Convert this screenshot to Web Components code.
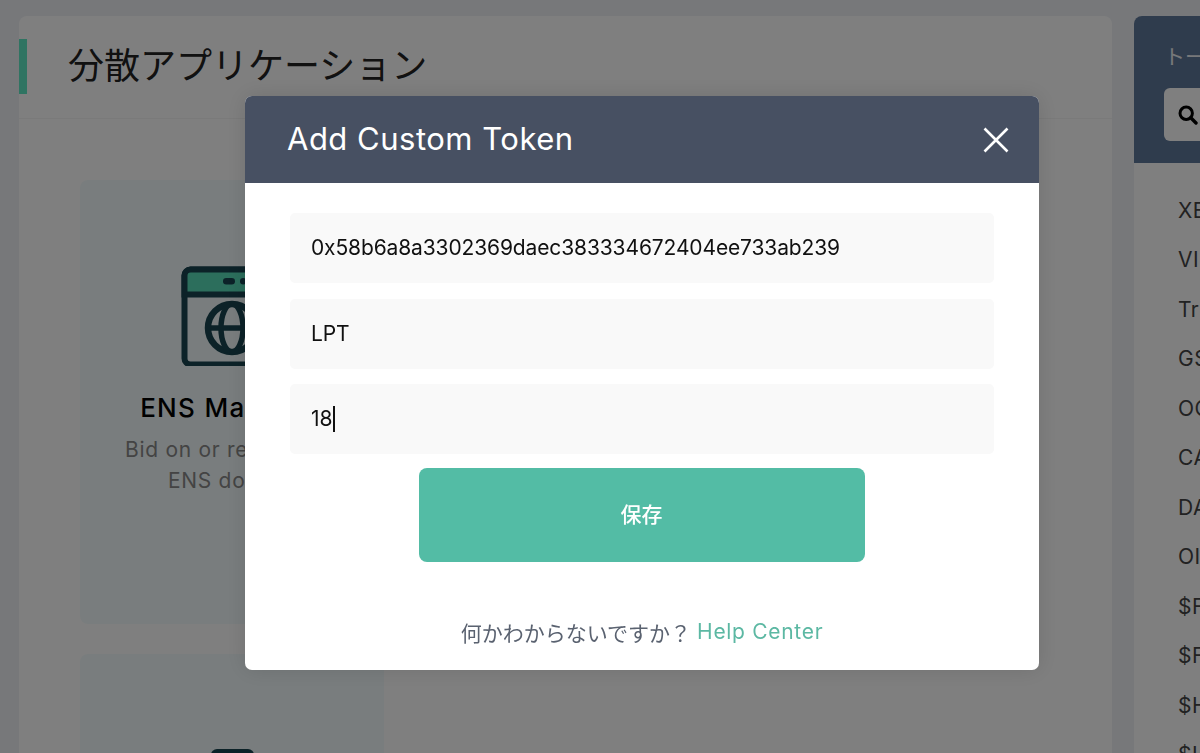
<!DOCTYPE html>
<html lang="ja"><head><meta charset="utf-8"><title>Add Custom Token</title>
<style>
html,body{margin:0;height:753px;overflow:hidden;background:#eef0f5;font-family:Inter,"Noto Sans CJK JP",sans-serif}
</style></head>
<body>
<dapp-page>
  <dapp-main>
    <dapp-tile name="ENS Manager" desc="Bid on or reserve an|ENS domain">
      <svg slot="icon" width="102" height="100" viewBox="0 0 102 100"><rect x="3.5" y="3.5" width="95" height="95" rx="6" fill="none" stroke="#184450" stroke-width="6"/><path d="M3.5 9.5a6 6 0 0 1 6-6h83a6 6 0 0 1 6 6v19H3.5z" fill="#58dcb8" stroke="#184450" stroke-width="6"/><rect x="42" y="12" width="12" height="6.5" rx="3.2" fill="#184450"/><rect x="59" y="12" width="6.5" height="6.5" rx="3.2" fill="#184450"/><rect x="71" y="12" width="6.5" height="6.5" rx="3.2" fill="#184450"/><circle cx="51" cy="62" r="24" fill="none" stroke="#184450" stroke-width="6.5"/><ellipse cx="51" cy="62" rx="11" ry="24" fill="none" stroke="#184450" stroke-width="5.5"/><path d="M27 62h48" stroke="#184450" stroke-width="5.5"/></svg>
    </dapp-tile>
    <dapp-tile>
      <svg slot="icon" width="102" height="100" viewBox="0 0 102 100"><rect x="30" y="9" width="43" height="40" rx="6" fill="#184450"/></svg>
    </dapp-tile>
  </dapp-main>
  <token-side></token-side>
</dapp-page>
<token-modal></token-modal>
<script>
function def(name, html, init){
  customElements.define(name, class extends HTMLElement{
    constructor(){super();this.attachShadow({mode:'open'}).innerHTML=html;}
    connectedCallback(){init&&init(this,this.shadowRoot);}
  });
}
def('dapp-page',`<style>:host{display:flex;gap:22px;padding:16px 0 0 19px;height:737px;overflow:hidden;box-sizing:content-box}</style><slot></slot>`);
def('dapp-main',`<style>
:host{display:block;flex:0 0 1093px;background:#fff;border-radius:8px 8px 0 0;height:800px}
header{display:flex;align-items:center;height:102px;border-bottom:1px solid #f4f4f4}
.bar{width:8px;height:55px;background:#5ee8c4;margin:-2px 41px 0 0}
h1{margin:-8px 0 0;font:400 36px/55px "Noto Sans CJK JP",sans-serif;color:#222}
.grid{display:grid;grid-template-columns:304px;gap:30px;padding:61px 0 0 61px}
</style><header><div class="bar"></div><h1>分散アプリケーション</h1></header><div class="grid"><slot></slot></div>`);
def('dapp-tile',`<style>
:host{display:flex;flex-direction:column;align-items:center;height:444px;padding-top:86px;box-sizing:border-box;background:#f3fbfc;border-radius:8px;text-align:center}
h2{margin:26px 0 0;font:500 26px/32px Inter,sans-serif;letter-spacing:1.3px;color:#000}
p{margin:10px 0 0;font:400 21px/31px Inter,sans-serif;letter-spacing:.7px;color:#888;white-space:nowrap}
</style><slot name="icon"></slot><h2></h2><p></p>`,(el,s)=>{
  const n=el.getAttribute('name'),d=el.getAttribute('desc');
  if(n){s.querySelector('h2').textContent=n;s.querySelector('p').innerHTML=d.split('|').join('<br>');}
  else{s.querySelector('h2').remove();s.querySelector('p').remove();}
});
def('token-side',`<style>
:host{display:block;flex:0 0 300px;background:#fff;border-radius:8px 8px 0 0;height:800px}
.head{height:147px;box-sizing:border-box;background:#5e789a;border-radius:8px 8px 0 0;padding:24px 0 0 31px}
.label{font:400 21px/30px "Noto Sans CJK JP",sans-serif;color:#fff;opacity:.9;height:48px;margin-left:-1px}
.search{display:flex;align-items:center;height:53px;width:240px;margin-left:-1px;padding-left:14px;box-sizing:border-box;background:#fff;border-radius:6px}
ul{list-style:none;margin:0;padding:22.5px 0 0 44px}
li{font:400 21px/49.5px Inter,sans-serif;letter-spacing:.5px;color:#444;height:49.5px}
</style><div class="head"><div class="label">トー</div><div class="search"><svg width="20" height="20" viewBox="0 0 20 20"><circle cx="8.2" cy="8.2" r="6.2" fill="none" stroke="#000" stroke-width="3"/><path d="M12.8 12.8l5.2 5.2" stroke="#000" stroke-width="3.4" stroke-linecap="round"/></svg></div></div>
<ul>${['XE','VI','Tr','GS','OC','CA','DA','OI','$F','$F','$H','$I'].map(t=>`<li>${t}</li>`).join('')}</ul>`);
def('token-field',`<style>
:host{display:flex;align-items:center;height:70px;padding-left:21px;background:#f9f9f9;border-radius:5px;font:400 21px/30px Inter,sans-serif;letter-spacing:-.13px;color:#111}
</style><slot></slot>`);
def('token-modal',`<style>
:host{position:fixed;inset:0;background:rgba(0,0,0,.5);display:block}
.dlg{position:absolute;left:245px;top:96px;width:794px;height:574px;background:#fff;border-radius:7px;box-shadow:0 0 22px rgba(0,0,0,.12);overflow:hidden;display:flex;flex-direction:column}
header{flex:0 0 87px;background:#475062;display:flex;align-items:center;justify-content:space-between;padding:0 30px 0 42px;color:#fff}
h3{margin:-1px 0 0;font:400 31px/40px Inter,sans-serif;letter-spacing:.5px}
.body{display:flex;flex-direction:column;gap:15.5px;padding:30px 45px 0}
.btn{align-self:center;width:446px;height:94px;margin:-1.5px 1px 0 0;background:#53bca5;border-radius:8px;color:#fff;display:flex;align-items:center;justify-content:center;font:500 21px/30px "Noto Sans CJK JP",sans-serif;padding-bottom:4px;box-sizing:border-box}
.foot{margin-top:37px;display:flex;justify-content:center;gap:6px;font:400 21px/34px Inter,"Noto Sans CJK JP",sans-serif;color:#5a6270}
.foot span{font-family:"Noto Sans CJK JP",sans-serif;font-size:21px}
a{color:#5cb8a3;text-decoration:none;letter-spacing:.7px}
</style><div class="dlg"><header><h3>Add Custom Token</h3><svg width="26" height="26" viewBox="0 0 26 26"><path d="M1.5 1.5l23 23M24.5 1.5l-23 23" stroke="#fff" stroke-width="2.6"/></svg></header>
<div class="body"><token-field>0x58b6a8a3302369daec383334672404ee733ab239</token-field><token-field>LPT</token-field><token-field id="c">18</token-field>
<div class="btn">保存</div><div class="foot"><span>何かわからないですか？</span><a>Help Center</a></div></div></div>`,(el,s)=>{
  const c=s.getElementById('c');const i=document.createElement('span');
  i.style.cssText='display:inline-block;width:1.5px;height:26px;background:#111;margin-left:1px';c.appendChild(i);
});
</script>
</body></html>
